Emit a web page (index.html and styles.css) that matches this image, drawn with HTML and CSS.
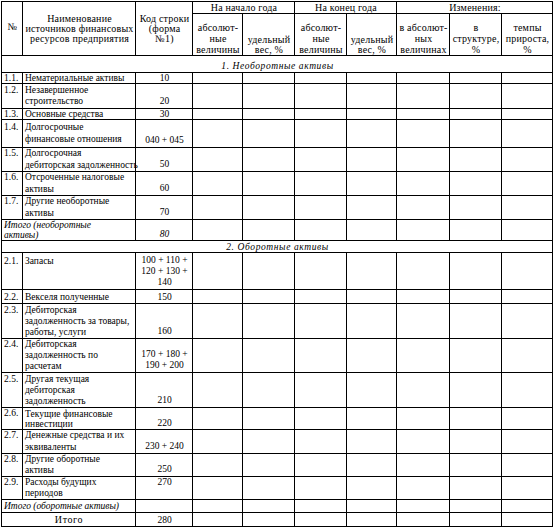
FILE: index.html
```html
<!DOCTYPE html>
<html lang="ru">
<head>
<meta charset="utf-8">
<title>Источники финансовых ресурсов</title>
<link rel="stylesheet" href="styles.css">
</head>
<body>
<div class="page">
<table class="fin">
  <colgroup>
    <col class="c-num"><col class="c-name"><col class="c-code">
    <col class="c-a"><col class="c-b"><col class="c-c"><col class="c-d">
    <col class="c-e"><col class="c-f"><col class="c-g">
  </colgroup>
  <thead>
    <tr class="h1">
      <th rowspan="2" class="hmain hnum">№</th>
      <th rowspan="2" class="hmain">Наименование<br>источников финансовых<br>ресурсов предприятия</th>
      <th rowspan="2" class="hmain">Код строки<br>(форма<br>№1)</th>
      <th colspan="2" class="hgroup">На начало года</th>
      <th colspan="2" class="hgroup">На конец года</th>
      <th colspan="3" class="hgroup">Изменения:</th>
    </tr>
    <tr class="h2">
      <th class="hsub">абсолют-<br>ные<br>величины</th>
      <th class="hsub hsub2">удельный<br>вес, %</th>
      <th class="hsub">абсолют-<br>ные<br>величины</th>
      <th class="hsub hsub2">удельный<br>вес, %</th>
      <th class="hsub">в абсолют-<br>ных<br>величинах</th>
      <th class="hsub">в<br>структуре,<br>%</th>
      <th class="hsub">темпы<br>прироста,<br>%</th>
    </tr>
  </thead>
  <tbody>
    <tr class="sec r17"><td colspan="10">1. Необоротные активы</td></tr>
    <tr class="r11 l1"><td class="num">1.1.</td><td class="name">Нематериальные активы</td><td class="code">10</td><td></td><td></td><td></td><td></td><td></td><td></td><td></td></tr>
    <tr class="r25 l2"><td class="num">1.2.</td><td class="name">Незавершенное<br>строительство</td><td class="code">20</td><td></td><td></td><td></td><td></td><td></td><td></td><td></td></tr>
    <tr class="r11 l1"><td class="num">1.3.</td><td class="name">Основные средства</td><td class="code">30</td><td></td><td></td><td></td><td></td><td></td><td></td><td></td></tr>
    <tr class="r28 l2"><td class="num">1.4.</td><td class="name">Долгосрочные<br>финансовые отношения</td><td class="code">040 + 045</td><td></td><td></td><td></td><td></td><td></td><td></td><td></td></tr>
    <tr class="r24 l2"><td class="num">1.5.</td><td class="name">Долгосрочная<br>дебиторская задолженность</td><td class="code">50</td><td></td><td></td><td></td><td></td><td></td><td></td><td></td></tr>
    <tr class="r24 l2"><td class="num">1.6.</td><td class="name">Отсроченные налоговые<br>активы</td><td class="code">60</td><td></td><td></td><td></td><td></td><td></td><td></td><td></td></tr>
    <tr class="r24 l2"><td class="num">1.7.</td><td class="name">Другие необоротные<br>активы</td><td class="code">70</td><td></td><td></td><td></td><td></td><td></td><td></td><td></td></tr>
    <tr class="r21 l2s total-i"><td colspan="2" class="name">Итого (необоротные<br>активы)</td><td class="code">80</td><td></td><td></td><td></td><td></td><td></td><td></td><td></td></tr>
    <tr class="sec r12 l1"><td colspan="10">2. Оборотные активы</td></tr>
    <tr class="r37 l3"><td class="num first">2.1.</td><td class="name top">Запасы</td><td class="code">100 + 110 +<br>120 + 130 +<br>140</td><td></td><td></td><td></td><td></td><td></td><td></td><td></td></tr>
    <tr class="r14 l1"><td class="num">2.2.</td><td class="name">Векселя полученные</td><td class="code">150</td><td></td><td></td><td></td><td></td><td></td><td></td><td></td></tr>
    <tr class="r35 l3"><td class="num">2.3.</td><td class="name">Дебиторская<br>задолженность за товары,<br>работы, услуги</td><td class="code">160</td><td></td><td></td><td></td><td></td><td></td><td></td><td></td></tr>
    <tr class="r34 l3"><td class="num">2.4.</td><td class="name">Дебиторская<br>задолженность по<br>расчетам</td><td class="code sum2">170 + 180 +<br>190 + 200</td><td></td><td></td><td></td><td></td><td></td><td></td><td></td></tr>
    <tr class="r35 l3"><td class="num">2.5.</td><td class="name">Другая текущая<br>дебиторская<br>задолженность</td><td class="code">210</td><td></td><td></td><td></td><td></td><td></td><td></td><td></td></tr>
    <tr class="r21 l2s"><td class="num">2.6.</td><td class="name">Текущие финансовые<br>инвестиции</td><td class="code">220</td><td></td><td></td><td></td><td></td><td></td><td></td><td></td></tr>
    <tr class="r24 l2"><td class="num">2.7.</td><td class="name">Денежные средства и их<br>эквиваленты</td><td class="code">230 + 240</td><td></td><td></td><td></td><td></td><td></td><td></td><td></td></tr>
    <tr class="r23 l2m"><td class="num">2.8.</td><td class="name">Другие оборотные<br>активы</td><td class="code">250</td><td></td><td></td><td></td><td></td><td></td><td></td><td></td></tr>
    <tr class="r22 l2m"><td class="num">2.9.</td><td class="name">Расходы будущих<br>периодов</td><td class="code first">270</td><td></td><td></td><td></td><td></td><td></td><td></td><td></td></tr>
    <tr class="r13 l1 total-i"><td colspan="2" class="name">Итого (оборотные активы)</td><td class="code"></td><td></td><td></td><td></td><td></td><td></td><td></td><td></td></tr>
    <tr class="r14 l1 grand"><td colspan="2" class="gname">Итого</td><td class="code">280</td><td></td><td></td><td></td><td></td><td></td><td></td><td></td></tr>
  </tbody>
</table>
</div>
</body>
</html>
```

FILE: styles.css
```css
html, body {
  margin: 0;
  padding: 0;
  background: #fff;
}
.page {
  padding: 1px 0 0 1px;
}
.fin {
  border-collapse: collapse;
  table-layout: fixed;
  width: 552px;
  font-family: "Liberation Serif", "Times New Roman", serif;
  font-size: 9.5px;
  color: #000;
}
.c-num { width: 21px; }
.c-name { width: 113px; }
.c-code { width: 57px; }
.c-a { width: 50px; }
.c-b { width: 52px; }
.c-c { width: 52px; }
.c-d { width: 50px; }
.c-e { width: 53px; }
.c-f { width: 52px; }
.c-g { width: 51px; }

.fin th, .fin td {
  border: 1px solid #000;
  padding: 0 1px 0 2px;
  white-space: nowrap;
}
.fin th {
  font-weight: normal;
  font-size: 10px;
  text-align: center;
  letter-spacing: 0.2px;
}
.h1 { height: 12px; }
.h2 { height: 42px; }
.hmain {
  line-height: 10px;
  vertical-align: middle;
  padding-bottom: 11px;
}
.fin th.hnum { padding-bottom: 4px; }
.hgroup {
  line-height: 10px;
  vertical-align: middle;
  letter-spacing: 0.6px;
}
.hsub {
  line-height: 11px;
  vertical-align: bottom;
  padding-bottom: 1px;
}
.hsub2 {
  line-height: 10px;
  padding-bottom: 5px;
}

/* body cells */
.fin td {
  line-height: 11px;
  vertical-align: middle;
}
.l1 td { line-height: 10px; }
.l2 td { line-height: 11.5px; }
.l2m td { line-height: 11px; }
.l2s td { line-height: 10px; }
.l3 td { line-height: 11px; }

.num { text-align: left; }
.name { text-align: left; }
.code { text-align: center; }

/* № aligned with the first line of the name */
.l2 td.num, .l2m td.num, .l2s td.num { padding-bottom: 11px; }
.l3 td.num { padding-bottom: 22px; }
.l2 td.code, .l2m td.code, .l2s td.code, .l3 td.code { vertical-align: bottom; padding-bottom: 1px; }

.fin td.top { vertical-align: top; padding-top: 3px; }
.fin td.num.first { vertical-align: top; padding-top: 3px; padding-bottom: 0; }
.fin td.code.first { vertical-align: middle; padding-bottom: 11px; }
.fin td.code.sum2 { vertical-align: middle; padding-top: 8px; padding-bottom: 0; }

.sec td {
  font-style: italic;
  text-align: center;
  letter-spacing: 0.6px;
  line-height: 10px;
  vertical-align: bottom;
  padding-bottom: 1px;
}
.sec.l1 td { vertical-align: middle; padding-bottom: 0; }
.total-i td { font-style: italic; }
.gname {
  text-align: center;
  font-size: 10px;
  letter-spacing: 0.6px;
}

.r11 { height: 11px; }
.r12 { height: 12px; }
.r13 { height: 13px; }
.r14 { height: 14px; }
.r17 { height: 17px; }
.r21 { height: 21px; }
.r22 { height: 22px; }
.r23 { height: 23px; }
.r24 { height: 24px; }
.r25 { height: 25px; }
.r28 { height: 28px; }
.r34 { height: 34px; }
.r35 { height: 35px; }
.r37 { height: 37px; }
```
